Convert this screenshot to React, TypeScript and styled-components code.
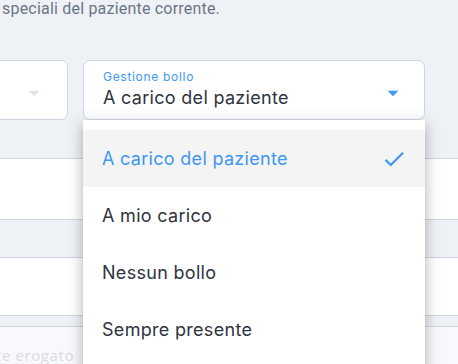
import React from "react";
import styled, { createGlobalStyle } from "styled-components";

const Global = createGlobalStyle`
  html, body { margin: 0; padding: 0; }
  body {
    background: #eef2f7;
    font-family: Inter, Roboto, "Noto Sans", sans-serif;
    overflow: hidden;
    width: 458px;
    height: 364px;
  }
`;

const Page = styled.div`
  position: relative;
  width: 458px;
  height: 364px;
  overflow: hidden;
`;

const Intro = styled.p`
  margin: 0;
  padding: 0 0 0 2px;
  font-family: Roboto, sans-serif;
  font-size: 16px;
  line-height: 18px;
  color: #6b7585;
  letter-spacing: 0.2px;
  white-space: nowrap;
`;

const FieldsRow = styled.div`
  display: grid;
  grid-template-columns: 269px 342px;
  gap: 15px;
  margin: 42px 0 0 -201px;
`;

const Field = styled.div`
  position: relative;
  height: 60px;
  box-sizing: border-box;
  background: #ffffff;
  border: 1px solid #cdd5e3;
  border-radius: 7px;
  display: flex;
  align-items: flex-end;
  padding: 0 19px 10px 19px;
`;

const FieldBody = styled.div`
  flex: 1;
  display: flex;
  flex-direction: column;
  gap: 3px;
`;

const Label = styled.span`
  font-size: 12px;
  line-height: 14px;
  color: #3d97f3;
  letter-spacing: 0.7px;
`;

const Value = styled.span`
  font-size: 18px;
  line-height: 22px;
  color: #2e3440;
  letter-spacing: 0.3px;
`;

const Caret = styled.svg<{ $color: string }>`
  width: 26px;
  height: 26px;
  fill: ${(p) => p.$color};
  margin: 0 -1px 3px 0;
  flex: none;
`;

const Menu = styled.ul`
  position: absolute;
  top: calc(100% + 1px);
  left: -1px;
  width: 342px;
  margin: 0;
  padding: 10px 0 0 0;
  list-style: none;
  background: #ffffff;
  box-shadow: 0 5px 5px -3px rgba(0, 0, 0, 0.2), 0 8px 10px 1px rgba(0, 0, 0, 0.14),
    0 3px 16px 2px rgba(0, 0, 0, 0.12);
  z-index: 5;
  height: 260px;
`;

const Item = styled.li<{ $selected?: boolean }>`
  height: 57px;
  display: flex;
  align-items: center;
  justify-content: space-between;
  padding: 0 18px 0 19px;
  background: ${(p) => (p.$selected ? "#f4f4f5" : "#ffffff")};
  color: ${(p) => (p.$selected ? "#3d97f3" : "#2e3440")};
  font-size: 18px;
  letter-spacing: 0.3px;
`;

const Check = styled.svg`
  width: 26px;
  height: 26px;
  fill: #3d97f3;
`;

const Bands = styled.div`
  display: flex;
  flex-direction: column;
  width: 100%;
`;

const Band = styled.div<{ $h: number; $bg: string }>`
  height: ${(p) => p.$h}px;
  background: ${(p) => p.$bg};
  border-bottom: 1px solid #cfd6e2;
`;

const Footer = styled.div`
  height: 38px;
  background: #f8f9fc;
  display: flex;
  align-items: flex-end;
  font-family: "Open Sans", sans-serif;
  font-size: 15px;
  color: #d8dce4;
  letter-spacing: 0.6px;
  white-space: nowrap;
  line-height: 20px;
`;

const FooterText = styled.span`
  margin-left: -4px;
`;

const options = ["A carico del paziente", "A mio carico", "Nessun bollo", "Sempre presente"];

export default function App() {
  return (
    <Page>
      <Global />
      <Intro>speciali del paziente corrente.</Intro>
      <FieldsRow>
        <Field>
          <FieldBody />
          <Caret $color="#dfe3ea" viewBox="0 0 24 24" style={{ marginRight: 1 }}>
            <path d="M7 10l5 5 5-5z" />
          </Caret>
        </Field>
        <Field>
          <FieldBody>
            <Label>Gestione bollo</Label>
            <Value>A carico del paziente</Value>
          </FieldBody>
          <Caret $color="#3d97f3" viewBox="0 0 24 24">
            <path d="M7 10l5 5 5-5z" />
          </Caret>
          <Menu>
            {options.map((o, i) => (
              <Item key={o} $selected={i === 0}>
                <span>{o}</span>
                {i === 0 && (
                  <Check viewBox="0 0 24 24">
                    <path d="M21 7L9 19l-5.5-5.5 1.41-1.41L9 16.17 19.59 5.59 21 7z" />
                  </Check>
                )}
              </Item>
            ))}
          </Menu>
        </Field>
      </FieldsRow>
      <Bands>
        <Band $h={38} $bg="#eef2f7" />
        <Band $h={60} $bg="#ffffff" />
        <Band $h={37} $bg="#eef2f7" />
        <Band $h={57} $bg="#ffffff" />
        <Band $h={10} $bg="#eef2f7" />
        <Footer>
          <FooterText>te erogato</FooterText>
        </Footer>
      </Bands>
    </Page>
  );
}
